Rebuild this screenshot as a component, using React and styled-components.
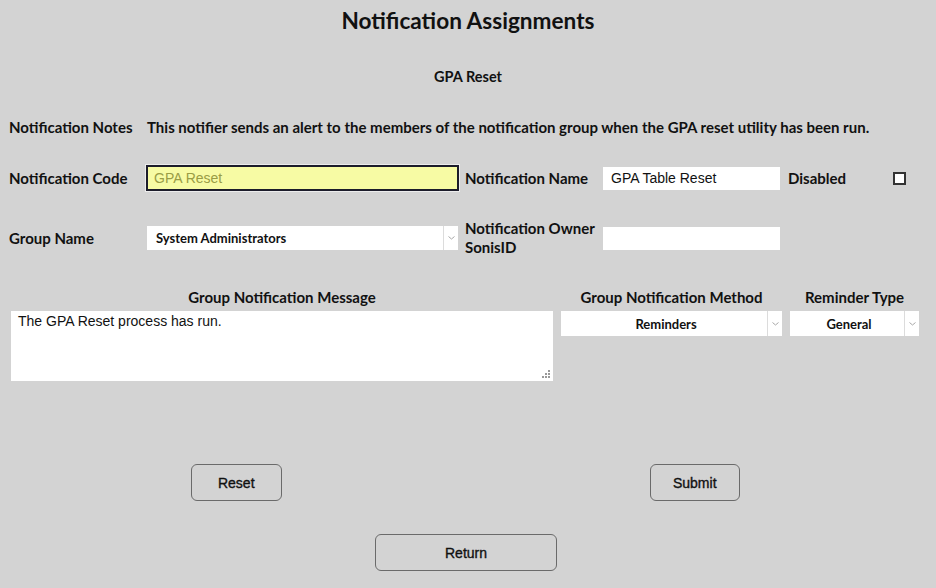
import React from "react";
import styled, { createGlobalStyle } from "styled-components";

const Global = createGlobalStyle`
  html, body { margin: 0; padding: 0; background: #d3d3d3; }
  body { font-family: Lato, "Open Sans", sans-serif; color: #111; }
  * { box-sizing: border-box; }
`;

const Page = styled.div`
  width: 936px;
  height: 588px;
  background: #d3d3d3;
  overflow: hidden;
`;

const Title = styled.h1`
  margin: 0;
  padding-top: 8px;
  height: 36px;
  text-align: center;
  font-size: 22.6px;
  font-weight: 700;
  line-height: 26px;
  color: #111;
`;

const Subtitle = styled.h2`
  margin: 0;
  margin-top: 33px;
  text-align: center;
  font-size: 14.5px;
  font-weight: 700;
  line-height: 16px;
`;

const FormGrid = styled.div`
  display: grid;
  grid-template-columns: 138px 318px 138px 185px 105px 13px;
  grid-template-rows: 20px 24px 38px;
  row-gap: 29px;
  align-items: center;
  margin-top: 32px;
  padding-left: 9px;
`;

const Label = styled.div`
  font-size: 15px;
  font-weight: 700;
  line-height: 19px;
  white-space: nowrap;
`;

const NotesText = styled.div`
  grid-column: 2 / -1;
  font-size: 15px;
  font-weight: 700;
  line-height: 19px;
  white-space: nowrap;
`;

const TextInput = styled.input`
  width: ${(p) => p.$w}px;
  height: ${(p) => p.$h || 24}px;
  font-family: "Liberation Sans", Arial, sans-serif;
  font-size: 14px;
  padding: 0 8px;
  border: none;
  background: #fff;
  color: #111;
  outline: none;
`;

const CodeInput = styled.input`
  width: 313px;
  height: 26px;
  margin-left: -1px;
  font-family: "Liberation Sans", Arial, sans-serif;
  font-size: 14px;
  padding: 0 6px;
  border: 2px solid #1c1c2a;
  outline: 1px solid #ececec;
  background: #f7fba4;
  color: #9a9d45;
`;

const SelectBox = styled.div`
  width: ${(p) => p.$w}px;
  height: ${(p) => p.$h || 24}px;
  background: #fff;
  display: flex;
  align-items: center;
`;

const SelectText = styled.div`
  flex: 1;
  font-size: 13px;
  font-weight: 700;
  text-align: ${(p) => (p.$center ? "center" : "left")};
  padding-left: ${(p) => (p.$center ? "4px" : "9px")};
  color: #111;
`;

const SelectArrow = styled.div`
  width: 15px;
  align-self: stretch;
  border-left: 1px solid #dcdcdc;
  display: flex;
  align-items: center;
  justify-content: center;
`;

const Checkbox = styled.div`
  width: 13px;
  height: 13px;
  border: 2px solid #333;
  background: #fff;
`;

const MsgGrid = styled.div`
  display: grid;
  grid-template-columns: 542px 221px 129px;
  column-gap: 8px;
  row-gap: 4px;
  margin-top: 31px;
  padding-left: 11px;
  align-items: start;
`;

const ColHead = styled.div`
  text-align: center;
  font-size: 15px;
  font-weight: 700;
  line-height: 19px;
  white-space: nowrap;
`;

const AreaWrap = styled.div`
  position: relative;
  width: 542px;
  height: 70px;
`;

const TextArea = styled.textarea`
  display: block;
  width: 542px;
  height: 70px;
  border: none;
  background: #fff;
  font-family: "Liberation Sans", Arial, sans-serif;
  font-size: 14px;
  padding: 2px 7px;
  color: #111;
  resize: none;
  outline: none;
`;

const Grip = styled.svg`
  position: absolute;
  right: 3px;
  bottom: 3px;
  pointer-events: none;
`;

const ButtonRow = styled.div`
  display: grid;
  grid-template-columns: 1fr 1fr;
  justify-items: center;
  padding: 0 12px 0 7px;
  margin-top: 83px;
`;

const Button = styled.button`
  width: ${(p) => p.$w}px;
  height: 37px;
  border: 1px solid #6a6a6a;
  border-radius: 6px;
  background: #d3d3d3;
  font-family: "Liberation Sans", Arial, sans-serif;
  font-size: 14px;
  color: #111;
  -webkit-text-stroke: 0.35px #111;
  cursor: pointer;
`;

const ReturnRow = styled.div`
  display: flex;
  justify-content: center;
  margin-top: 33px;
  padding-right: 4px;
`;

const Chevron = () => (
  <svg width="7" height="4" viewBox="0 0 7 4">
    <path d="M0.5 0.5 L3.5 3 L6.5 0.5" stroke="#a8a8a8" strokeWidth="1" fill="none" />
  </svg>
);

const Select = ({ w, value, center }) => (
  <SelectBox $w={w} $h={center ? 25 : 24}>
    <SelectText $center={center}>{value}</SelectText>
    <SelectArrow>
      <Chevron />
    </SelectArrow>
  </SelectBox>
);

export default function App() {
  return (
    <Page>
      <Global />
      <Title>Notification Assignments</Title>
      <Subtitle>GPA Reset</Subtitle>
      <FormGrid>
        <Label>Notification Notes</Label>
        <NotesText>
          This notifier sends an alert to the members of the notification group when the GPA reset utility has been run.
        </NotesText>

        <Label>Notification Code</Label>
        <div>
          <CodeInput defaultValue="GPA Reset" />
        </div>
        <Label>Notification Name</Label>
        <div>
          <TextInput $w={177} $h={23} defaultValue="GPA Table Reset" />
        </div>
        <Label>Disabled</Label>
        <Checkbox />

        <Label>Group Name</Label>
        <Select w={311} value="System Administrators" />
        <Label>
          Notification Owner
          <br />
          SonisID
        </Label>
        <div>
          <TextInput $w={177} $h={23} defaultValue="" />
        </div>
      </FormGrid>

      <MsgGrid>
        <ColHead>Group Notification Message</ColHead>
        <ColHead>Group Notification Method</ColHead>
        <ColHead>Reminder Type</ColHead>
        <AreaWrap>
          <TextArea defaultValue="The GPA Reset process has run." />
          <Grip width="8" height="8" viewBox="0 0 8 8">
            <rect x="6" y="0" width="2" height="2" fill="#999" />
            <rect x="3" y="3" width="2" height="2" fill="#999" />
            <rect x="6" y="3" width="2" height="2" fill="#999" />
            <rect x="0" y="6" width="2" height="2" fill="#999" />
            <rect x="3" y="6" width="2" height="2" fill="#999" />
            <rect x="6" y="6" width="2" height="2" fill="#999" />
          </Grip>
        </AreaWrap>
        <Select w={221} value="Reminders" center />
        <Select w={129} value="General" center />
      </MsgGrid>

      <ButtonRow>
        <Button $w={91}>Reset</Button>
        <Button $w={90}>Submit</Button>
      </ButtonRow>
      <ReturnRow>
        <Button $w={182}>Return</Button>
      </ReturnRow>
    </Page>
  );
}
